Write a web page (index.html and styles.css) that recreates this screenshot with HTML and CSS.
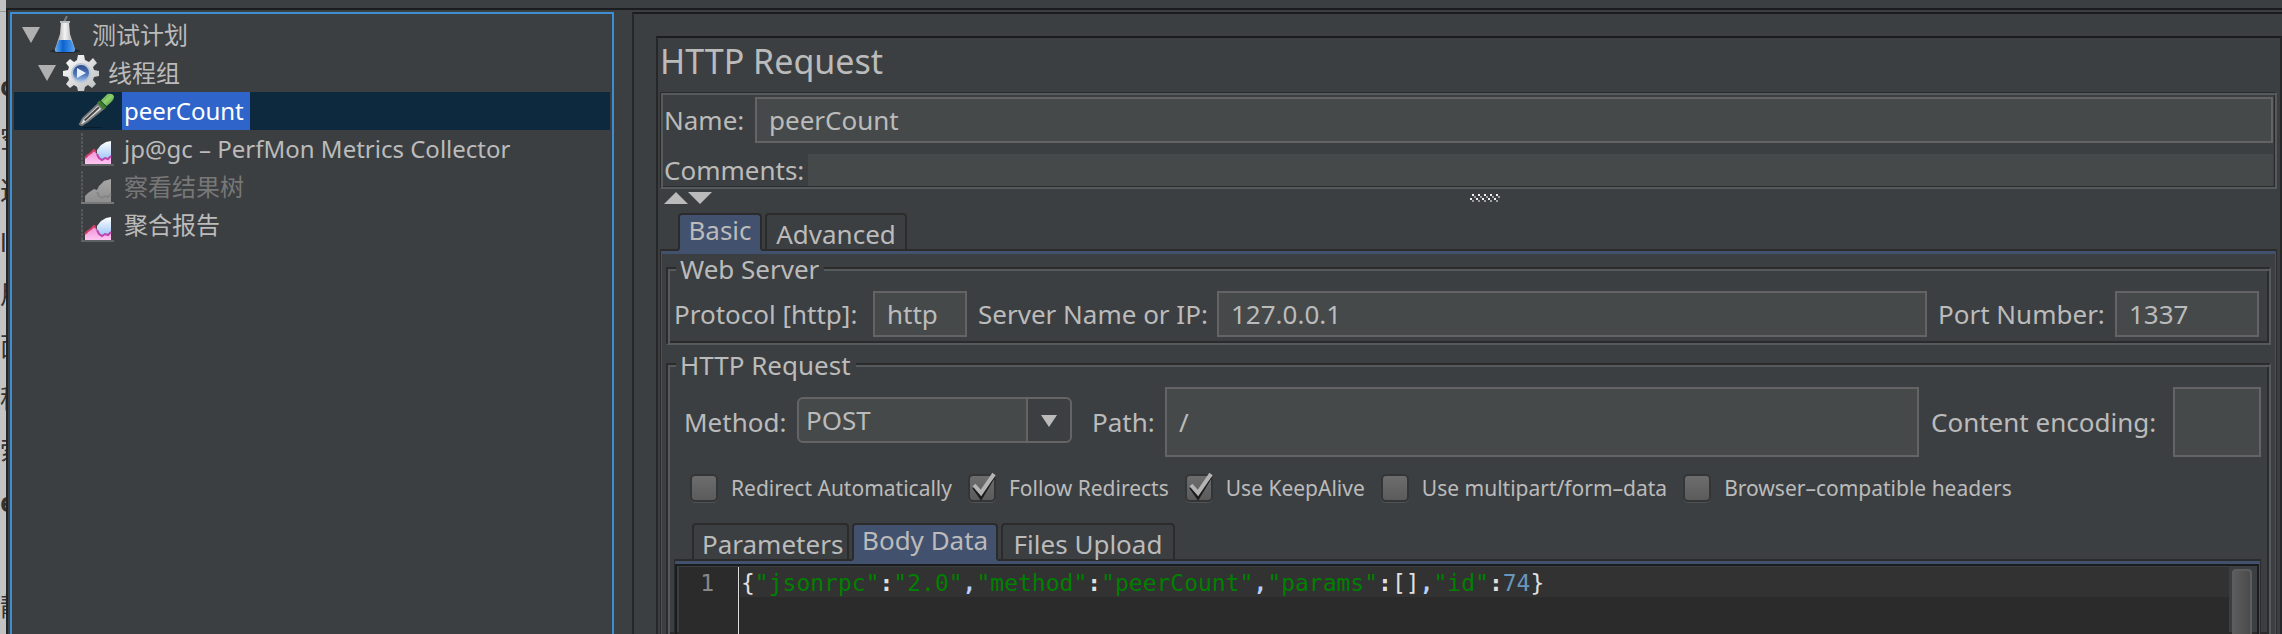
FILE: index.html
```html
<!DOCTYPE html>
<html lang="en">
<head>
<meta charset="utf-8">
<title>HTTP Request</title>
<link rel="stylesheet" href="styles.css">
</head>
<body>
<svg class="defs" aria-hidden="true">
  <defs>
    <linearGradient id="glass" x1="0" x2="1"><stop offset="0" stop-color="#8d9092"/><stop offset=".5" stop-color="#f4f4f4"/><stop offset="1" stop-color="#9a9d9f"/></linearGradient>
    <linearGradient id="liquid" x1="0" x2="1"><stop offset="0" stop-color="#6fb0f2"/><stop offset=".4" stop-color="#0a63d0"/><stop offset="1" stop-color="#5ba3ef"/></linearGradient>
    <linearGradient id="steel" x1="0" y1="0" x2="1" y2="1"><stop offset="0" stop-color="#fff"/><stop offset="1" stop-color="#b9bbbc"/></linearGradient>
    <linearGradient id="lens" x1="0" y1="0" x2="0" y2="1"><stop offset="0" stop-color="#2a4a86"/><stop offset=".6" stop-color="#5179bb"/><stop offset="1" stop-color="#a8c6ee"/></linearGradient>
    <linearGradient id="bulb" x1="0" y1="0" x2="1" y2="1"><stop offset="0" stop-color="#4d9a35"/><stop offset=".5" stop-color="#8fd070"/><stop offset="1" stop-color="#3c8428"/></linearGradient>
    <linearGradient id="sky" x1="0" y1="0" x2="0" y2="1"><stop offset="0" stop-color="#fff"/><stop offset="1" stop-color="#86b8f5"/></linearGradient>
    <linearGradient id="pink" x1="0" y1="0" x2="0" y2="1"><stop offset="0" stop-color="#f08fd6"/><stop offset="1" stop-color="#ffc6f2"/></linearGradient>
    <linearGradient id="ash" x1="0" y1="0" x2="0" y2="1"><stop offset="0" stop-color="#a6a6a6"/><stop offset="1" stop-color="#8f8f8f"/></linearGradient>
    <symbol id="chart" viewBox="0 0 36 36">
      <path d="M3 2V34" stroke="#55585a" stroke-width="2" stroke-dasharray="3 1"/><path d="M2 34H35" stroke="#5f6264" stroke-width="2"/>
      <path d="M18 26V19L22 14L27 11L32 10V33H18Z" fill="url(#sky)"/>
      <path d="M6 33V27L9 24L12 22L15 19L18 23L20 27L23 29L26 27L29 28L32 25V33Z" fill="url(#pink)"/>
      <path d="M6 27L9 24L12 22L15 19L17 21" fill="none" stroke="#cf3f68" stroke-width="2"/>
      <path d="M18 23L20 27L23 29L26 27L29 28L32 25" fill="none" stroke="#bd46ad" stroke-width="2"/>
    </symbol>
    <symbol id="chart-off" viewBox="0 0 36 36">
      <path d="M3 2V34" stroke="#55585a" stroke-width="2" stroke-dasharray="3 1"/><path d="M2 34H35" stroke="#777" stroke-width="2"/>
      <path d="M6 33V27L9 24L15 20L18 21L20 17L25 12L32 10V33Z" fill="url(#ash)"/>
      <path d="M18 23L20 27L23 29L26 27L29 28L32 25" fill="none" stroke="#858585" stroke-width="2"/>
    </symbol>
    <symbol id="tick" viewBox="0 0 30 32">
      <path d="M6 16L13 26L25 6" fill="none" stroke="#1c1c1c" stroke-width="4"/>
      <path d="M6 14L13 22L26 3" fill="none" stroke="#b4b4b4" stroke-width="4"/>
    </symbol>
  </defs>
</svg>

<aside class="backdrop" aria-hidden="true">
  <b>o</b><span>空</span><span>这</span><span>lo</span><span>用</span><span>面</span><span>程</span><span>索</span><b>e</b><span></span><span>静</span>
</aside>

<main class="window">
  <nav class="tree">
    <ul>
      <li class="node level-1">
        <svg class="toggle" viewBox="0 0 18 16"><path d="M0 0H18L9 16Z" fill="#b0b0b0"/></svg>
        <svg class="icon" viewBox="0 0 36 38">
          <ellipse cx="18" cy="35" rx="15" ry="2" fill="#23282e"/>
          <path d="M17 6L20 0" stroke="#777a7c" stroke-width="2"/>
          <path d="M14 6H22L23 18L28 33Q28 36 25 36H11Q7 36 8 33L13 18Z" fill="url(#glass)"/>
          <path d="M12 24H24L28 33Q28 36 25 36H11Q7 36 8 33Z" fill="url(#liquid)"/>
          <path d="M13 6H23" stroke="#b9bcbe" stroke-width="2"/>
        </svg>
        <span class="caption">测试计划</span>
      </li>
      <li class="node level-2">
        <svg class="toggle" viewBox="0 0 18 16"><path d="M0 0H18L9 16Z" fill="#b0b0b0"/></svg>
        <svg class="icon" viewBox="0 0 36 36">
          <path d="M15 0H21L22 5L26 7L30 3L34 8L30 12L31 15L36 16V21L31 22L30 25L33 29L29 33L25 30L22 32L21 36H15L14 32L11 30L7 33L3 29L6 25L5 22L0 21V16L5 15L6 12L3 8L7 4L11 7L14 5Z" fill="url(#steel)"/>
          <circle cx="18" cy="18" r="9" fill="url(#lens)" stroke="#bcc6d8" stroke-width="2"/>
          <path d="M14 13L23 18L14 23Z" fill="#e6effa"/>
        </svg>
        <span class="caption">线程组</span>
      </li>
      <li class="node level-3 selected">
        <svg class="icon" viewBox="0 0 38 38">
          <path d="M5 36H22L26 37H4Z" fill="#0a1b29"/>
          <path d="M1 33L4 27L20 12L25 17L9 30L3 34Z" fill="#ddd" stroke="#77797a" stroke-width="2"/>
          <path d="M6 29L21 15" stroke="#444" stroke-width="2"/>
          <path d="M19 10L22 8L29 15L26 18Z" fill="#3f7f2c"/>
          <path d="M23 8L30 1Q36 0 37 4Q37 8 29 14Z" fill="url(#bulb)"/>
        </svg>
        <span class="caption">peerCount</span>
      </li>
      <li class="node level-3"><svg class="icon"><use href="#chart"/></svg><span class="caption">jp@gc – PerfMon Metrics Collector</span></li>
      <li class="node level-3 disabled"><svg class="icon"><use href="#chart-off"/></svg><span class="caption">察看结果树</span></li>
      <li class="node level-3"><svg class="icon"><use href="#chart"/></svg><span class="caption">聚合报告</span></li>
    </ul>
  </nav>

  <section class="workspace">
    <form class="editor">
      <h1>HTTP Request</h1>
      <div class="summary">
        <div class="summary-row">
          <label class="name-label" for="name">Name:</label>
          <input class="field" id="name" type="text" value="peerCount">
        </div>
        <div class="summary-row">
          <label class="comments-label" for="comments">Comments:</label>
          <input class="field plain" id="comments" type="text">
        </div>
      </div>
      <div class="splitter">
        <svg class="arrows" viewBox="0 0 48 12"><path d="M0 12L12 0L24 12ZM24 0H48L36 12Z" fill="#bbb"/></svg>
        <svg class="grip" viewBox="0 0 30 8">
          <path d="M2 0h2v2h-2zM8 0h2v2h-2zM14 0h2v2h-2zM20 0h2v2h-2zM26 0h2v2h-2zM0 4h2v2h-2zM6 4h2v2h-2zM12 4h2v2h-2zM18 4h2v2h-2zM24 4h2v2h-2z" fill="#f2f2f2"/>
          <path d="M4 2h2v2h-2zM10 2h2v2h-2zM16 2h2v2h-2zM22 2h2v2h-2zM28 2h2v2h-2zM2 6h2v2h-2zM8 6h2v2h-2zM14 6h2v2h-2zM20 6h2v2h-2zM26 6h2v2h-2z" fill="#a0a0a0"/>
        </svg>
      </div>

      <div class="tabs" role="tablist">
        <button class="tab active basic" type="button" role="tab" aria-selected="true">Basic</button>
        <button class="tab advanced" type="button" role="tab" aria-selected="false">Advanced</button>
      </div>
      <div class="pane">
        <fieldset class="group">
          <legend>Web Server</legend>
          <div class="server-row">
            <label class="protocol-label" for="protocol">Protocol [http]:</label>
            <input class="field protocol" id="protocol" type="text" value="http">
            <label class="host-label" for="host">Server Name or IP:</label>
            <input class="field" id="host" type="text" value="127.0.0.1">
            <label class="port-label" for="port">Port Number:</label>
            <input class="field port" id="port" type="text" value="1337">
          </div>
        </fieldset>

        <fieldset class="group request">
          <legend>HTTP Request</legend>
          <div class="request-row">
            <label class="method-label" for="method">Method:</label>
            <div class="combo">
              <select id="method"><option>POST</option><option>GET</option></select>
              <svg class="combo-arrow" viewBox="0 0 16 12"><path d="M0 0H16L8 12Z" fill="#bbb"/></svg>
            </div>
            <label class="path-label" for="path">Path:</label>
            <input class="field tall" id="path" type="text" value="/">
            <label class="encoding-label" for="encoding">Content encoding:</label>
            <input class="field tall encoding" id="encoding" type="text">
          </div>
          <div class="options">
            <label class="option"><input type="checkbox"><svg class="tick"><use href="#tick"/></svg>Redirect Automatically</label>
            <label class="option"><input type="checkbox" checked><svg class="tick"><use href="#tick"/></svg>Follow Redirects</label>
            <label class="option"><input type="checkbox" checked><svg class="tick"><use href="#tick"/></svg>Use KeepAlive</label>
            <label class="option"><input type="checkbox"><svg class="tick"><use href="#tick"/></svg>Use multipart/form–data</label>
            <label class="option"><input type="checkbox"><svg class="tick"><use href="#tick"/></svg>Browser–compatible headers</label>
          </div>
          <div class="tabs" role="tablist">
            <button class="tab parameters" type="button" role="tab" aria-selected="false">Parameters</button>
            <button class="tab active body-data" type="button" role="tab" aria-selected="true">Body Data</button>
            <button class="tab files" type="button" role="tab" aria-selected="false">Files Upload</button>
          </div>
          <div class="pane body-pane">
            <div class="code">
              <div class="gutter">1</div>
              <pre class="source"><code class="line">{<i>"jsonrpc"</i><b>:</b><i>"2.0"</i><u>,</u><i>"method"</i><b>:</b><i>"peerCount"</i><u>,</u><i>"params"</i><b>:</b>[]<u>,</u><i>"id"</i><b>:</b><em>74</em>}</code></pre>
              <div class="scroll"><div class="thumb"></div></div>
            </div>
          </div>
        </fieldset>
      </div>
    </form>
  </section>
</main>
</body>
</html>
```
FILE: styles.css
```css
:root {
  --bg: #3c3f41;
  --field: #45494a;
  --line: #646464;
  --dark: #2b2b2b;
  --light: #555a5c;
  --black: #1b1c1d;
  --accent: #42516d;
  --text: #bbb;
}
* { box-sizing: border-box; }
body {
  margin: 0;
  height: 100vh;
  display: flex;
  overflow: hidden;
  background: var(--bg);
  color: var(--text);
  font-family: "Noto Sans", "Noto Sans CJK SC", sans-serif;
  font-size: 26px;
  line-height: 30px;
}
.defs { position: absolute; width: 0; height: 0; }
svg { display: block; flex: none; }
input, select, button { font: inherit; color: inherit; margin: 0; border-radius: 0; outline: none; }
label { flex: none; white-space: nowrap; }

.backdrop {
  flex: none;
  width: 6px;
  height: 100%;
  overflow: hidden;
  background: linear-gradient(#c3c3c3 11px, #999 11px, #999 12px, #c3c3c3 12px);
  color: #333;
  padding-top: 60px;
  font-size: 26px;
  line-height: 52px;
}
.backdrop > * { display: block; height: 52px; white-space: nowrap; }

.window {
  flex: 1;
  min-width: 0;
  display: flex;
  gap: 18px;
  margin-top: 8px;
  padding: 2px 0 0 2px;
  border-top: 2px solid var(--black);
  border-left: 2px solid #222425;
}

.tree { flex: none; width: 604px; border: 2px solid #3d8dcf; border-bottom: 0; padding: 2px; }
.tree ul { list-style: none; margin: 0; padding: 0; }
.node { display: flex; align-items: center; height: 38px; font-size: 24px; }
.level-1 { padding-left: 8px; }
.level-2 { padding-left: 24px; }
.level-3 { padding-left: 64px; }
.toggle { width: 18px; height: 16px; margin-right: 6px; }
.icon { width: 38px; height: 36px; margin-right: 6px; }
.level-1 .icon { height: 38px; }
.caption { padding: 0 2px; line-height: 38px; white-space: nowrap; }
.selected { background: #0d293e; color: #fff; }
.selected .caption { background: #2f65ca; padding-right: 6px; }
.disabled { color: #777; }

.workspace {
  flex: 1;
  min-width: 0;
  display: flex;
  border-top: 2px solid var(--black);
  border-left: 2px solid #252728;
  padding: 22px 0 0 22px;
}
.editor {
  flex: 1;
  min-width: 0;
  display: flex;
  flex-direction: column;
  border: 2px solid #252728;
  border-top-color: var(--black);
  border-bottom: 0;
  padding: 0 3px 0 2px;
}
h1 { margin: 0; padding: 0 0 8px; font-size: 34px; font-weight: 400; line-height: 46px; }

.summary {
  display: flex;
  flex-direction: column;
  gap: 11px;
  border: solid;
  border-width: 1px 2px 2px 1px;
  border-color: var(--dark) var(--light) var(--light) var(--dark);
  box-shadow: inset 2px 2px var(--light), inset -1px -1px var(--dark);
  padding: 4px 2px 1px 3px;
}
.summary-row { display: flex; align-items: center; }
.name-label { width: 91px; }
.comments-label { width: 144px; }
.field {
  flex: 1;
  min-width: 0;
  height: 46px;
  padding: 0 12px;
  background: var(--field);
  border: 2px solid var(--line);
}
.plain { height: 32px; border: 0; padding: 0 4px; }

.splitter { display: flex; align-items: flex-start; height: 24px; padding: 3px 20px 3px 4px; }
.arrows { width: 48px; height: 12px; }
.grip { width: 30px; height: 8px; margin: 2px auto 0; }

.tabs { display: flex; gap: 3px; flex: none; padding-left: 18px; position: relative; }
.tab {
  height: 38px;
  margin-bottom: -2px;
  padding: 4px 8px 0;
  background: var(--bg);
  border: 2px solid var(--dark);
  border-radius: 4px 4px 0 0;
  line-height: 30px;
  text-align: center;
  white-space: nowrap;
}
.tab.active { background: var(--accent); border-bottom-color: var(--accent); padding: 0 8px 4px; }
.basic { width: 84px; }
.advanced { width: 142px; }
.parameters { width: 157px; }
.body-data { width: 146px; }
.files { width: 174px; }

.pane {
  flex: 1;
  min-height: 0;
  display: flex;
  flex-direction: column;
  gap: 5px;
  border: 1px solid var(--dark);
  border-width: 2px 1px 0;
  box-shadow: inset 0 3px var(--accent), inset 1px 0 var(--accent), inset -1px 0 var(--accent);
  padding: 3px 5px 0;
}
.group {
  flex: none;
  min-width: 0;
  margin: 0;
  padding: 9px 10px 6px 6px;
  border: 2px solid;
  border-color: var(--dark) var(--light) var(--light) var(--dark);
  box-shadow: inset 2px 2px var(--light), inset -2px -2px var(--dark);
}
.group legend { margin-left: 2px; padding: 2px 5px 0 4px; line-height: 26px; background: var(--bg); }
.server-row, .request-row { display: flex; align-items: center; }
.protocol-label { width: 199px; }
.protocol { flex: none; width: 94px; }
.host-label { width: 250px; padding-left: 11px; }
.port-label { width: 188px; padding-left: 11px; }
.port { flex: none; width: 144px; }

.request { flex: 1; min-height: 0; padding: 9px 8px 0 6px; border-bottom: 0; }
.request-row { padding-left: 10px; }
.method-label { width: 113px; }
.combo { position: relative; flex: none; width: 275px; margin-bottom: 4px; }
.combo select {
  display: block;
  width: 100%;
  height: 46px;
  padding: 0 54px 0 7px;
  appearance: none;
  background: linear-gradient(90deg, var(--field) 227px, var(--line) 227px, var(--line) 229px, var(--bg) 229px);
  border: 2px solid var(--line);
  border-radius: 6px;
}
.combo-arrow { position: absolute; right: 15px; top: 18px; width: 16px; height: 12px; pointer-events: none; }
.path-label { width: 93px; padding-left: 20px; }
.tall { height: 70px; }
.encoding-label { width: 254px; padding-left: 12px; }
.encoding { flex: none; width: 88px; }

.options { display: flex; gap: 16px; padding: 17px 0 0 16px; font-size: 21px; line-height: 28px; }
.option { position: relative; display: flex; align-items: center; gap: 13px; }
.option input {
  appearance: none;
  width: 28px;
  height: 28px;
  border: 2px solid #333536;
  border-radius: 5px;
  background: linear-gradient(#6d6d6d, #5b5b5b);
  box-shadow: 0 1px #505354;
}
.tick { position: absolute; left: 0; top: -3px; width: 30px; height: 32px; display: none; pointer-events: none; }
.option input:checked + .tick { display: block; }

.request .tabs { padding: 21px 0 0 18px; }
.body-pane { height: 80px; padding: 3px 1px 0 0; }
.code {
  flex: 1;
  display: flex;
  border: 2px solid var(--black);
  border-width: 2px 2px 0;
  padding: 1px 0 0 2px;
  font-family: "DejaVu Sans Mono", monospace;
  font-size: 23px;
  line-height: 32px;
}
.gutter { width: 60px; padding-right: 24px; text-align: right; color: #888; background: var(--dark); border-right: 1px solid #ddd; }
.source { flex: 1; margin: 0; background: var(--dark); color: #e0e0e0; font: inherit; padding-left: 1px; }
.line { display: block; height: 30px; padding-left: 1px; background: #323232; font: inherit; }
.line i { font-style: normal; color: #008000; }
.line b { font-weight: 700; }
.line u { text-decoration: none; color: #b9cfff; font-weight: 700; }
.line em { font-style: normal; color: #6897bb; }
.scroll { width: 28px; padding: 2px 5px 0 3px; }
.thumb { height: 100%; border: 2px solid #5b5d5e; border-bottom: 0; border-radius: 4px 4px 0 0; background: linear-gradient(90deg, #5c5c5c, #4b4b4b); }
```
